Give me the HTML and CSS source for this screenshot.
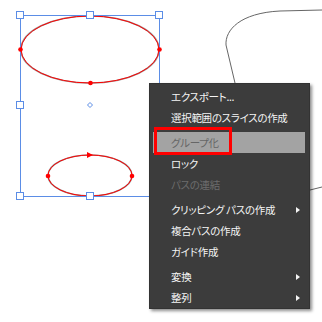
FILE: index.html
```html
<!DOCTYPE html>
<html lang="ja">
<head>
<meta charset="utf-8">
<link rel="stylesheet" href="styles.css">
</head>
<body>
<div class="stage">
  <svg class="canvas" width="322" height="322" viewBox="0 0 322 322">
    <path d="M235,83 L226,45 C225,30 240,13 280,11 L322,10" fill="none" stroke="#666" stroke-width="1"/>
    <path d="M310,190 L322,187" fill="none" stroke="#666" stroke-width="1"/>
    <ellipse cx="90" cy="49.5" rx="69" ry="33.5" fill="none" stroke="#999" stroke-width="1.6"/>
    <ellipse cx="90" cy="49.5" rx="69" ry="33.5" fill="none" stroke="#f00" stroke-width="1"/>
    <ellipse cx="90" cy="175.5" rx="42" ry="20.5" fill="none" stroke="#999" stroke-width="1.6"/>
    <ellipse cx="90" cy="175.5" rx="42" ry="20.5" fill="none" stroke="#f00" stroke-width="1"/>
    <rect x="20.5" y="15.5" width="139" height="181" fill="none" stroke="#5b8de6" stroke-width="1"/>
    <g fill="#f00">
      <circle cx="20.5" cy="49.5" r="2.3"/>
      <circle cx="159.5" cy="49.5" r="2.3"/>
      <circle cx="90.5" cy="83" r="2.3"/>
      <circle cx="48" cy="176" r="2.3"/>
      <circle cx="132" cy="176" r="2.3"/>
      <path d="M87,152 L93,155 L87,158 Z"/>
    </g>
    <g fill="#fff" stroke="#5b8de6" stroke-width="1">
      <rect x="16.5" y="11.5" width="7" height="7"/>
      <rect x="86.5" y="11.5" width="7" height="7"/>
      <rect x="155.5" y="11.5" width="7" height="7"/>
      <rect x="16.5" y="101.5" width="7" height="7"/>
      <rect x="16.5" y="192.5" width="7" height="7"/>
      <rect x="86.5" y="192.5" width="7" height="7"/>
      <path d="M90,102.5 L92.5,105 L90,107.5 L87.5,105 Z"/>
    </g>
  </svg>

  <div class="menu">
    <div class="item">エクスポート...</div>
    <div class="item">選択範囲のスライスの作成</div>
    <div class="sep"></div>
    <div class="item active">グループ化</div>
    <div class="item">ロック</div>
    <div class="item disabled">パスの連結</div>
    <div class="sep"></div>
    <div class="item sub">クリッピング パスの作成<span class="arrow"></span></div>
    <div class="item">複合パスの作成</div>
    <div class="item">ガイド作成</div>
    <div class="sep"></div>
    <div class="item sub">変換<span class="arrow"></span></div>
    <div class="item sub">整列<span class="arrow"></span></div>
    <div class="mark"></div>
  </div>
</div>
</body>
</html>
```

FILE: styles.css
```css
html, body {
  margin: 0;
  padding: 0;
  background: #ffffff;
}

.stage {
  position: relative;
  width: 322px;
  height: 322px;
  overflow: hidden;
}

.canvas {
  position: absolute;
  left: 0;
  top: 0;
  display: block;
}

.menu {
  position: absolute;
  left: 149px;
  top: 83px;
  width: 161px;
  height: 226px;
  box-sizing: border-box;
  background: #3c3c3c;
  border: 1px solid #333333;
  box-shadow: 2px 2px 3px rgba(0, 0, 0, 0.45);
  padding: 2px 4px 3px 3px;
  display: flex;
  flex-direction: column;
  font-family: "Noto Sans CJK JP", "Noto Sans", sans-serif;
  font-size: 10.5px;
  letter-spacing: -0.3px;
  font-feature-settings: "palt" 1;
  color: #f4f4f4;
}

.item {
  height: 21px;
  line-height: 21px;
  padding-left: 18px;
  display: flex;
  align-items: center;
  justify-content: space-between;
  white-space: nowrap;
}

.item.active {
  background: #a3a3a3;
  color: #666666;
}

.item.disabled {
  color: #6c6c6c;
}

.arrow {
  width: 0;
  height: 0;
  border-top: 3.5px solid transparent;
  border-bottom: 3.5px solid transparent;
  border-left: 4px solid #f4f4f4;
  margin-right: 5px;
}

.sep {
  height: 1px;
  background: #555555;
  margin: 0 2px 4px 2px;
}

.mark {
  position: absolute;
  left: 4px;
  top: 43px;
  width: 78px;
  height: 28px;
  box-sizing: border-box;
  border: 3px solid #ff0000;
}
```
